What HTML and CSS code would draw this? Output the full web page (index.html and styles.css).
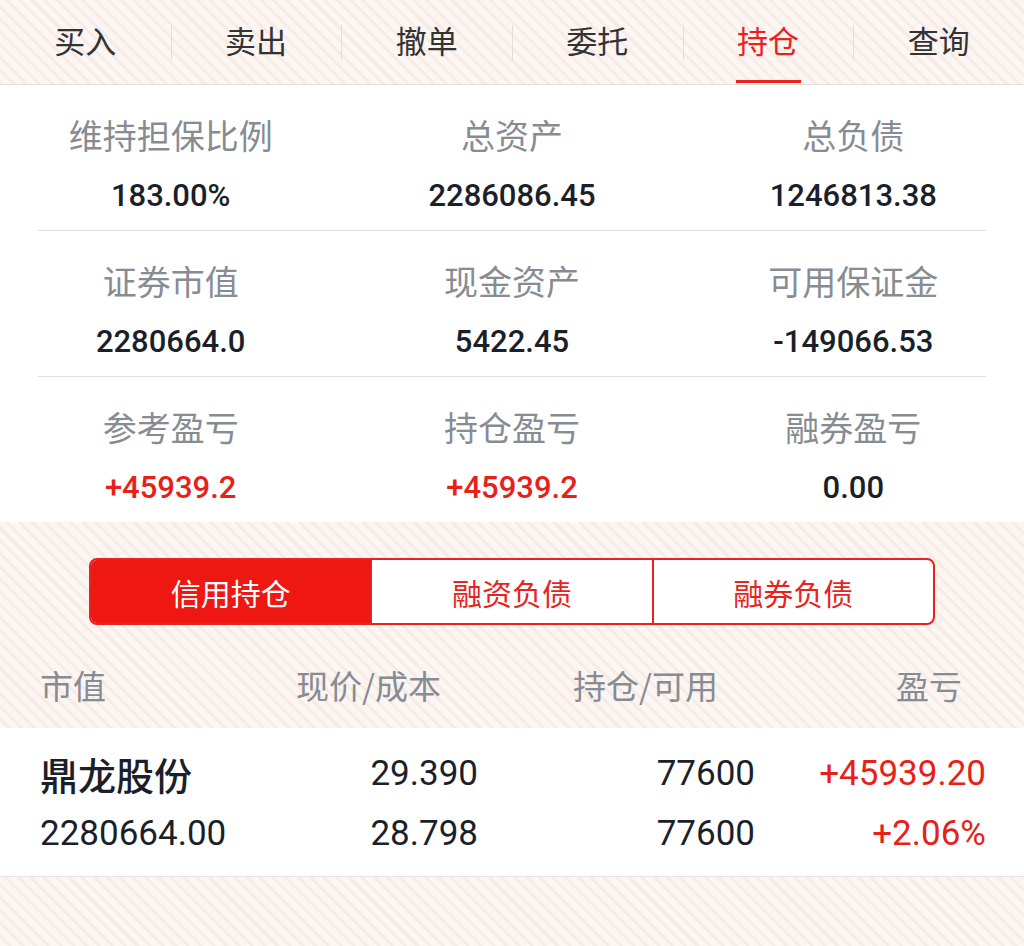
FILE: index.html
```html
<!DOCTYPE html>
<html lang="zh-CN">
<head>
    <meta charset="UTF-8">
    <meta name="viewport" content="width=device-width, initial-scale=1.0">
    <title>信用持仓</title>
    <link rel="stylesheet" href="styles.css">
</head>
<body>
    <div class="page">
        <nav class="tabs">
            <div class="tab">买入</div>
            <div class="tab">卖出</div>
            <div class="tab">撤单</div>
            <div class="tab">委托</div>
            <div class="tab active">持仓</div>
            <div class="tab">查询</div>
        </nav>

        <section class="summary">
            <div class="summary-row">
                <div class="cell"><div class="label">维持担保比例</div><div class="value">183.00%</div></div>
                <div class="cell"><div class="label">总资产</div><div class="value">2286086.45</div></div>
                <div class="cell"><div class="label">总负债</div><div class="value">1246813.38</div></div>
            </div>
            <div class="divider"></div>
            <div class="summary-row">
                <div class="cell"><div class="label">证券市值</div><div class="value">2280664.0</div></div>
                <div class="cell"><div class="label">现金资产</div><div class="value">5422.45</div></div>
                <div class="cell"><div class="label">可用保证金</div><div class="value">-149066.53</div></div>
            </div>
            <div class="divider"></div>
            <div class="summary-row">
                <div class="cell"><div class="label">参考盈亏</div><div class="value up">+45939.2</div></div>
                <div class="cell"><div class="label">持仓盈亏</div><div class="value up">+45939.2</div></div>
                <div class="cell"><div class="label">融券盈亏</div><div class="value">0.00</div></div>
            </div>
        </section>

        <div class="segment">
            <div class="seg-item selected">信用持仓</div>
            <div class="seg-item">融资负债</div>
            <div class="seg-item">融券负债</div>
        </div>

        <div class="list-head">
            <span class="h-mv">市值</span>
            <span class="h-price">现价/成本</span>
            <span class="h-qty">持仓/可用</span>
            <span class="h-pl">盈亏</span>
        </div>

        <div class="position">
            <div class="name">鼎龙股份</div>
            <div class="num">29.390</div>
            <div class="num">77600</div>
            <div class="num up">+45939.20</div>
            <div class="mv">2280664.00</div>
            <div class="num">28.798</div>
            <div class="num">77600</div>
            <div class="num up">+2.06%</div>
        </div>
    </div>
</body>
</html>
```

FILE: styles.css
```css
html, body {
    margin: 0;
    padding: 0;
}
body {
    font-family: Roboto, "Noto Sans CJK SC", sans-serif;
    width: 1024px;
    height: 946px;
    overflow: hidden;
    background-color: #fcf5f2;
    background-image: repeating-linear-gradient(45deg, #fcf5f2 0, #fcf5f2 6px, #f5ebe7 6px, #f5ebe7 9px);
}
.page {
    min-height: 946px;
}

/* top tabs */
.tabs {
    display: flex;
    height: 84px;
    border-bottom: 1px solid #e2dfde;
}
.tab {
    flex: 1;
    position: relative;
    display: flex;
    align-items: center;
    justify-content: center;
    padding-bottom: 6px;
    font-size: 31px;
    color: #333;
}
.tab + .tab::before {
    content: "";
    position: absolute;
    left: 0;
    top: 25px;
    height: 35px;
    border-left: 1px solid #e3dcd9;
}
.tab.active {
    color: #e8231c;
}
.tab.active::after {
    content: "";
    position: absolute;
    left: 50%;
    bottom: 1px;
    width: 65px;
    margin-left: -32px;
    height: 3px;
    background: #e8231c;
}

/* summary */
.summary {
    background: #fff;
}
.summary-row {
    display: grid;
    grid-template-columns: 1fr 1fr 1fr;
    height: 145px;
    box-sizing: border-box;
    padding-top: 28px;
    text-align: center;
}
.label {
    font-family: "Noto Sans CJK SC", sans-serif;
    font-size: 34px;
    line-height: 44px;
    color: #878c92;
}
.value {
    margin-top: 19px;
    font-size: 31px;
    line-height: 40px;
    font-weight: 500;
    color: #1b1f2a;
}
.up {
    color: #e8201a;
}
.divider {
    height: 1px;
    margin: 0 38px;
    background: #dedede;
}

/* segmented control */
.segment {
    display: flex;
    margin: 36px 89px 0;
    height: 67px;
    box-sizing: border-box;
    border: 2px solid #e8231c;
    border-radius: 8px;
    overflow: hidden;
    background: #fff;
}
.seg-item {
    flex: 1;
    display: flex;
    align-items: center;
    justify-content: center;
    font-size: 30px;
    color: #e8231c;
}
.seg-item + .seg-item {
    border-left: 2px solid #e8231c;
}
.seg-item.selected {
    background: #ee1711;
    color: #fff;
}

/* list header */
.list-head {
    display: flex;
    height: 103px;
    box-sizing: border-box;
    padding: 38px 62px 0 40px;
    font-family: "Noto Sans CJK SC", sans-serif;
    font-size: 33px;
    line-height: 44px;
    color: #878c92;
}
.h-mv {
    width: 256px;
}
.h-price {
    width: 277px;
}
.h-pl {
    margin-left: auto;
}

/* position row */
.position {
    display: grid;
    grid-template-columns: 250px 188px 277px 231px;
    grid-auto-rows: 60px;
    padding: 15px 38px 13px 40px;
    background: #fff;
    border-bottom: 1px solid #e6e3e2;
    font-size: 35px;
    color: #1b1f2a;
    align-items: center;
}
.name {
    font-size: 38px;
    font-weight: 500;
}
.num {
    text-align: right;
}
.num.up {
    color: #e8201a;
}
```
